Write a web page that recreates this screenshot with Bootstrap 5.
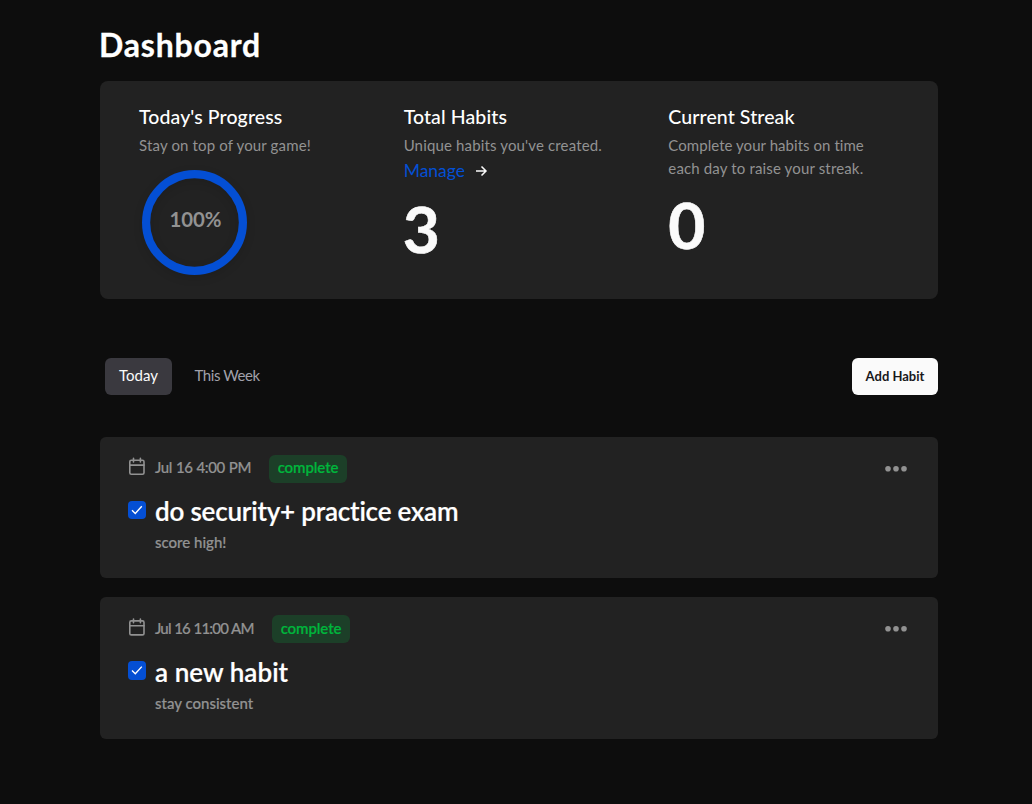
<!DOCTYPE html>
<html lang="en" data-bs-theme="dark">
<head>
<meta charset="utf-8">
<meta name="viewport" content="width=device-width, initial-scale=1">
<title>Dashboard</title>
<link href="https://cdn.jsdelivr.net/npm/bootstrap@5.3.0/dist/css/bootstrap.min.css" rel="stylesheet">
<style>
  body { background: #0d0d0d; color: #fafafa; font-family: Lato, "Liberation Sans", sans-serif; font-variant-ligatures: none; overflow: hidden; }
  .page { width: 838px; margin-left: 100px; padding-top: 26px; }
  .page-title { font-size: 32px; line-height: 38px; font-weight: 700; letter-spacing: .8px; margin: 0 0 17px -1px; -webkit-text-stroke: .3px; }
  .panel { background: #222; border: 0; border-radius: 8px; }
  .stats { height: 217.5px; padding: 22px 5px 0 39px; }
  .stat-title { font-size: 19.5px; line-height: 28px; font-weight: 500; letter-spacing: .1px; margin-bottom: 3px; white-space: nowrap; }
  .stat-text { color: #929292; font-size: 15px; line-height: 23px; letter-spacing: .15px; white-space: nowrap; }
  .manage { color: #044fd4; font-size: 17.5px; line-height: 26px; padding-top: 1px; }
  .figure-num { font-size: 64px; line-height: 64px; font-weight: 700; margin: 13px 0 0 -1px; -webkit-text-stroke: .6px; }
  .streak .figure-num { margin-left: 0; }
  .streak-text { letter-spacing: .05px; }
  .ring { width: 105px; height: 105px; margin: 12.5px 0 0 2.5px; }
  .ring svg { filter: drop-shadow(0 3px 4px rgba(0,0,0,.12)); }
  .ring-label { position: absolute; inset: 0; color: #929292; font-size: 20.4px; font-weight: 700; line-height: 99px; text-align: center; padding-left: 3px; }
  .toolbar { height: 37px; margin: 59.5px 0 42px; padding-left: 5px; }
  .tab { height: 37px; line-height: 34px; font-size: 15px; border-radius: 6px; padding: 0 14px 4px; border: 0; color: #a1a1aa; white-space: nowrap; display: block; }
  .tab.active, .tab.active:hover { background: #3a393f; color: #fafafa; }
  .tab-today { width: 67px; }
  .tab-week { width: 92px; margin-left: 8.5px; letter-spacing: -.42px; }
  .add { width: 86px; height: 37px; line-height: 37px; background: #fafafa; color: #18181b; border: 0; border-radius: 6px; padding: 0; font-size: 13px; font-weight: 700; white-space: nowrap; }
  .habit { height: 141px; margin-bottom: 19.25px; padding: 18px 30px 0 28px; border-radius: 6px; }
  .when { color: #929292; font-size: 15px; line-height: 25px; font-weight: 500; width: 95px; letter-spacing: -.37px; word-spacing: .5px; margin-left: 9px; white-space: nowrap; -webkit-text-stroke: .2px; }
  .state { background: #1c3f28; color: #00b53c; font-size: 15px; line-height: 24px; height: 28px; width: 78px; font-weight: 600; letter-spacing: -.1px; border-radius: 6px; margin-left: 19px; text-align: center; -webkit-text-stroke: .2px; }
  .check { width: 18px; height: 18px; background: #044fd4; border-radius: 4px; margin-top: 2px; }
  .habit-title { font-size: 26px; line-height: 34px; font-weight: 600; letter-spacing: -.2px; margin: -5px 0 0 9px; white-space: nowrap; -webkit-text-stroke: .2px; }
  .note { color: #929292; font-size: 15px; line-height: 22px; font-weight: 500; margin: 3px 0 0 27px; -webkit-text-stroke: .2px; }
  .habit + .habit { height: 142px; }
  .habit + .habit .when { width: 98px; letter-spacing: -.8px; padding-top: 1px; }
  .habit + .habit .state { line-height: 26px; }
  .habit + .habit .habit-title { letter-spacing: .05px; margin-top: -4px; }
  .habit + .habit .check { height: 19px; }
</style>
</head>
<body>
<main class="page">
  <h1 class="page-title">Dashboard</h1>

  <section class="panel card stats">
    <div class="row g-0">
      <div class="col-4">
        <h2 class="stat-title">Today's Progress</h2>
        <div class="stat-text">Stay on top of your game!</div>
        <div class="ring position-relative">
          <svg class="d-block" width="105" height="105" viewBox="0 0 105 105"><circle cx="52.5" cy="52.5" r="48.4" fill="none" stroke="#044fd4" stroke-width="8.2"/></svg>
          <div class="ring-label">100%</div>
        </div>
      </div>
      <div class="col-4">
        <h2 class="stat-title">Total Habits</h2>
        <div class="stat-text">Unique habits you've created.</div>
        <div class="d-flex align-items-center">
          <a class="manage text-decoration-none" href="#">Manage</a>
          <svg class="arrow ms-2" width="16" height="16" viewBox="0 0 16 16" fill="none" stroke="#fafafa" stroke-width="1.5"><path d="M3 8h10M8.5 3.5L13 8l-4.5 4.5"/></svg>
        </div>
        <div class="figure-num">3</div>
      </div>
      <div class="col-4 streak">
        <h2 class="stat-title">Current Streak</h2>
        <div class="stat-text"><span class="streak-text">Complete your habits on time</span><br>each day to raise your streak.</div>
        <div class="figure-num">0</div>
      </div>
    </div>
  </section>

  <div class="toolbar d-flex">
    <button class="tab tab-today btn active">Today</button>
    <button class="tab tab-week btn">This Week</button>
    <button class="add btn ms-auto">Add Habit</button>
  </div>

  <article class="panel card habit">
    <div class="d-flex">
      <svg class="mt-1 overflow-visible" width="18" height="18" viewBox="0 0 18 18" fill="none" stroke="#929292" stroke-width="1.6" stroke-linecap="round"><rect x="1.8" y="1.2" width="14.2" height="14" rx="1.5"/><path d="M1.8 6.1H16M5.5 -.8v3.8M12.4 -.8v3.8"/></svg>
      <div class="when">Jul 16 4:00 PM</div>
      <div class="state">complete</div>
      <svg class="ms-auto" width="24" height="28" viewBox="0 0 24 28" fill="#929292"><circle cx="4" cy="13.7" r="2.8"/><circle cx="12" cy="13.7" r="2.8"/><circle cx="20" cy="13.7" r="2.8"/></svg>
    </div>
    <div class="d-flex mt-3">
      <div class="check"><svg class="d-block" width="18" height="18" viewBox="0 0 18 18" fill="none" stroke="#fff" stroke-width="1.4"><path d="M4 9.2l3.3 3.2L13.8 5.2"/></svg></div>
      <h3 class="habit-title">do security+ practice exam</h3>
    </div>
    <div class="note">score high!</div>
  </article>

  <article class="panel card habit">
    <div class="d-flex">
      <svg class="mt-1 overflow-visible" width="18" height="18" viewBox="0 0 18 18" fill="none" stroke="#929292" stroke-width="1.6" stroke-linecap="round"><rect x="1.8" y="1.9" width="14.2" height="14" rx="1.5"/><path d="M1.8 6.8H16M5.5 0v3.8M12.4 0v3.8"/></svg>
      <div class="when">Jul 16 11:00 AM</div>
      <div class="state">complete</div>
      <svg class="ms-auto" width="24" height="28" viewBox="0 0 24 28" fill="#929292"><circle cx="4" cy="13.7" r="2.8"/><circle cx="12" cy="13.7" r="2.8"/><circle cx="20" cy="13.7" r="2.8"/></svg>
    </div>
    <div class="d-flex mt-3">
      <div class="check"><svg class="d-block" width="18" height="18" viewBox="0 0 18 18" fill="none" stroke="#fff" stroke-width="1.4"><path d="M4 9.6l3.3 3.2L13.8 5.6"/></svg></div>
      <h3 class="habit-title">a new habit</h3>
    </div>
    <div class="note">stay consistent</div>
  </article>
</main>
<script src="https://cdn.jsdelivr.net/npm/bootstrap@5.3.0/dist/js/bootstrap.bundle.min.js"></script>
</body>
</html>
